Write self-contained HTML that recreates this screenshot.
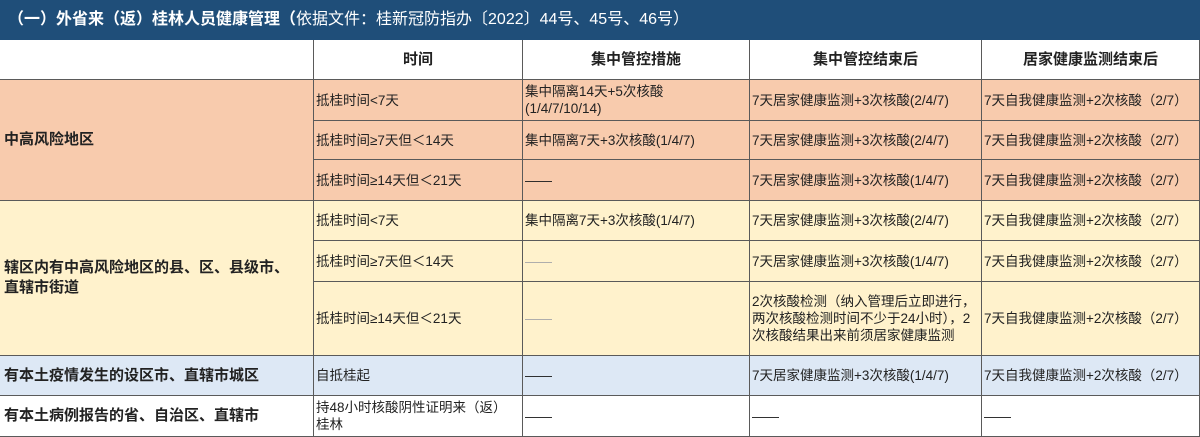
<!DOCTYPE html><html><head><meta charset="utf-8"><style>
body{margin:0;width:1200px;height:437px;overflow:hidden;background:#fff;font-family:"Liberation Sans","Noto Sans CJK SC",sans-serif;}
.t{position:absolute;left:0;top:0;width:1200px;height:40px;background:#1f4e79;color:#fff;font-size:16px;line-height:40px;padding-left:8px;box-sizing:border-box;}
.c{position:absolute;box-sizing:border-box;border-right:1px solid #5a5a5a;border-bottom:1px solid #5a5a5a;font-size:13.5px;color:#222;display:flex;align-items:center;padding:0 2px;line-height:17px;}
.b{font-weight:bold;font-size:15px;padding-left:4px;line-height:20px}
.h{justify-content:center;font-weight:bold;font-size:15px}
.o{background:#f8cbad}.y{background:#fff2cc}.l{background:#dde8f5}.w{background:#fff}
</style></head><body>
<div class="t"><b>（一）外省来（返）桂林人员健康管理（</b>依据文件：桂新冠防指办〔2022〕44号、45号、46号）</div>
<script>
var X=[0,314,523,750,982,1200];
function c(x0,x1,y0,y1,cls,txt){var d=document.createElement('div');d.className='c '+cls;d.style.left=X[x0]+'px';d.style.width=(X[x1]-X[x0])+'px';d.style.top=y0+'px';d.style.height=(y1-y0)+'px';d.innerHTML=txt;document.body.appendChild(d);}
c(0,1,40,80,'w','');c(1,2,40,80,'w h','时间');c(2,3,40,80,'w h','集中管控措施');c(3,4,40,80,'w h','集中管控结束后');c(4,5,40,80,'w h','居家健康监测结束后');
c(0,1,80,201,'o b','中高风险地区');
var A='7天居家健康监测+3次核酸',B='7天自我健康监测+2次核酸（2/7）';
c(1,2,80,121,'o','抵桂时间&lt;7天');c(2,3,80,121,'o','集中隔离14天+5次核酸<br>(1/4/7/10/14)');c(3,4,80,121,'o',A+'(2/4/7)');c(4,5,80,121,'o',B);
c(1,2,121,160,'o','抵桂时间≥7天但＜14天');c(2,3,121,160,'o','集中隔离7天+3次核酸(1/4/7)');c(3,4,121,160,'o',A+'(2/4/7)');c(4,5,121,160,'o',B);
c(1,2,160,201,'o','抵桂时间≥14天但＜21天');c(2,3,160,201,'o','——');c(3,4,160,201,'o',A+'(1/4/7)');c(4,5,160,201,'o',B);
c(0,1,201,356,'y b','辖区内有中高风险地区的县、区、县级市、<br>直辖市街道');
c(1,2,201,241,'y','抵桂时间&lt;7天');c(2,3,201,241,'y','集中隔离7天+3次核酸(1/4/7)');c(3,4,201,241,'y',A+'(2/4/7)');c(4,5,201,241,'y',B);
c(1,2,241,282,'y','抵桂时间≥7天但＜14天');c(2,3,241,282,'y','<span style="color:#aaa">——</span>');c(3,4,241,282,'y',A+'(1/4/7)');c(4,5,241,282,'y',B);
c(1,2,282,356,'y','抵桂时间≥14天但＜21天');c(2,3,282,356,'y','<span style="color:#aaa">——</span>');c(3,4,282,356,'y','2次核酸检测（纳入管理后立即进行，两次核酸检测时间不少于24小时），2次核酸结果出来前须居家健康监测');c(4,5,282,356,'y',B);
c(0,1,356,396,'l b','有本土疫情发生的设区市、直辖市城区');c(1,2,356,396,'l','自抵桂起');c(2,3,356,396,'l','——');c(3,4,356,396,'l',A+'(1/4/7)');c(4,5,356,396,'l',B);
c(0,1,396,437,'w b','有本土病例报告的省、自治区、直辖市');c(1,2,396,437,'w','持48小时核酸阴性证明来（返）<br>桂林');c(2,3,396,437,'w','——');c(3,4,396,437,'w','——');c(4,5,396,437,'w','——');
</script>
</body></html>
